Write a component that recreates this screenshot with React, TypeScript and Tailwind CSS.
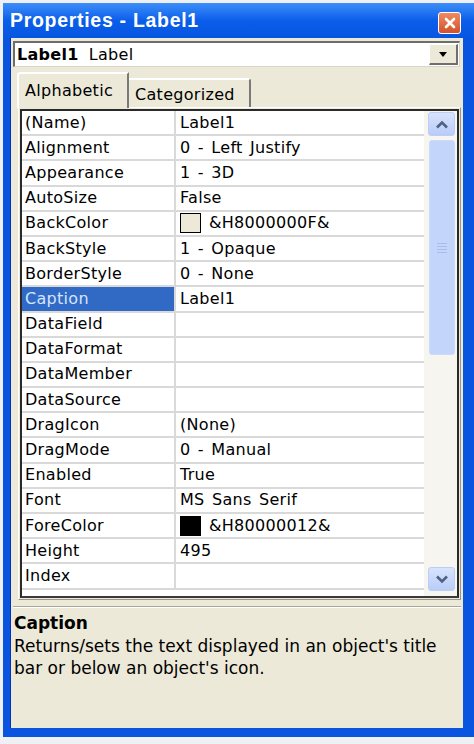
type Row = { name: string; value: string; swatch?: string; selected?: boolean };

const rows: Row[] = [
  { name: "(Name)", value: "Label1" },
  { name: "Alignment", value: "0 - Left Justify" },
  { name: "Appearance", value: "1 - 3D" },
  { name: "AutoSize", value: "False" },
  { name: "BackColor", value: "&H8000000F&", swatch: "bg-[#ece9d8]" },
  { name: "BackStyle", value: "1 - Opaque" },
  { name: "BorderStyle", value: "0 - None" },
  { name: "Caption", value: "Label1", selected: true },
  { name: "DataField", value: "" },
  { name: "DataFormat", value: "" },
  { name: "DataMember", value: "" },
  { name: "DataSource", value: "" },
  { name: "DragIcon", value: "(None)" },
  { name: "DragMode", value: "0 - Manual" },
  { name: "Enabled", value: "True" },
  { name: "Font", value: "MS Sans Serif" },
  { name: "ForeColor", value: "&H80000012&", swatch: "bg-black" },
  { name: "Height", value: "495" },
  { name: "Index", value: "" },
];

function Chevron({ up }: { up?: boolean }) {
  return (
    <svg width="14" height="9" viewBox="0 0 14 9">
      <path
        d={up ? "M2 7.5 L7 2.5 L12 7.5" : "M2 1.5 L7 6.5 L12 1.5"}
        fill="none"
        stroke="#4d6185"
        strokeWidth="2.6"
      />
    </svg>
  );
}

function ScrollButton({ up }: { up?: boolean }) {
  return (
    <div className="w-[27px] h-[24px] rounded-[3px] border border-[#bccdf6] bg-linear-to-b from-[#d8e3fd] to-[#b9ccf9] flex items-center justify-center">
      <Chevron up={up} />
    </div>
  );
}

function Grid() {
  return (
    <div className="flex h-full bg-white">
      <div className="flex-1 flex flex-col">
        {rows.map((r) => (
          <div key={r.name} className="flex h-[25.2px] border-b-2 border-[#d9d9d9]">
            <div
              className={
                "w-[154px] pl-[3px] flex items-center border-r-2 border-[#d9d9d9] " +
                (r.selected ? "bg-[#316ac5] text-[#d4e4ff]" : "text-black")
              }
            >
              {r.name}
            </div>
            <div className="flex-1 pl-[4px] flex items-center gap-[8px] text-black [word-spacing:2px]">
              {r.swatch && <span className={"w-[21px] h-[20px] border-[1.5px] border-black " + r.swatch} />}
              {r.value}
            </div>
          </div>
        ))}
      </div>
      <div className="w-[33px] bg-[#f6f5f0] flex flex-col items-center pt-[1px] pb-[5px] pl-[2px]">
        <ScrollButton up />
        <div className="flex-1 w-full flex flex-col items-center pt-[4px]">
          <div className="w-[26px] h-[215px] rounded-[3px] border border-[#cddbfb] bg-[#c4d5fb] flex flex-col items-center justify-center gap-[2px]">
            <div className="w-[10px] h-px bg-[#a8bcec]" />
            <div className="w-[10px] h-px bg-[#a8bcec]" />
            <div className="w-[10px] h-px bg-[#a8bcec]" />
            <div className="w-[10px] h-px bg-[#a8bcec]" />
          </div>
        </div>
        <ScrollButton />
      </div>
    </div>
  );
}

export default function App() {
  return (
    <div className="w-[474px] h-[744px] bg-[#eef0f3] pt-[3px] pl-[3px] pb-[7px] font-['DejaVu_Sans',Verdana,sans-serif] text-[16px] tracking-[0.3px] overflow-hidden">
      <div className="h-full flex flex-col bg-[#0a55e0]">
        {/* Title bar */}
        <div className="h-[35px] shrink-0 flex items-center justify-between pl-[7px] pr-[13px] bg-linear-to-b from-[#3c8ef9] via-[#0a5ee9] to-[#0756e2]">
          <span className="text-white font-bold text-[19.5px] tracking-[0.7px] font-['Liberation_Sans',Arial,sans-serif]">
            Properties - Label1
          </span>
          <div className="mt-[4px] w-[23px] h-[22px] rounded-[3px] border border-white bg-linear-to-b from-[#f08a60] to-[#d2502a] flex items-center justify-center">
            <svg width="12" height="12" viewBox="0 0 12 12">
              <path d="M2 2 L10 10 M10 2 L2 10" stroke="white" strokeWidth="2.6" strokeLinecap="round" />
            </svg>
          </div>
        </div>

        {/* Body */}
        <div className="flex-1 ml-[7px] mr-[11px] mb-[9px] bg-[#ece9d8] flex flex-col border-l border-[#0831b0]">
          {/* Object combo */}
          <div className="mt-[3px] ml-[2px] w-[447px] h-[26px] bg-white border-t-2 border-l-2 border-[#6d6d6d] border-b border-r border-b-[#d8d5c8] border-r-[#d8d5c8] flex items-center justify-between">
            <span className="pl-[2px] text-black">
              <span className="font-bold">Label1</span>
              <span className="ml-[10px]">Label</span>
            </span>
            <div className="w-[29px] h-[21px] mr-[1px] bg-[#ece9d8] border-t border-l border-white border-b-2 border-r-2 border-b-[#6f6f6f] border-r-[#6f6f6f] flex items-center justify-center">
              <svg width="8" height="5" viewBox="0 0 8 5">
                <path d="M0 0 H8 L4 5 Z" fill="black" />
              </svg>
            </div>
          </div>

          {/* Tabs */}
          <div className="mt-[5px] ml-[6px] h-[36px] flex items-end relative z-10">
            <div className="w-[112px] h-[36px] bg-[#ece9d8] border-l-2 border-t-2 border-white border-r-2 border-r-[#7a7a7a] rounded-tl-[3px] pl-[6px] pt-[5px] text-black">
              Alphabetic
            </div>
            <div className="w-[122px] h-[29px] mb-[1px] bg-[#ece9d8] border-t-2 border-white border-r-2 border-r-[#7a7a7a] rounded-tr-[3px] pl-[6px] pt-[3px] text-black">
              Categorized
            </div>
          </div>

          {/* Grid panel */}
          <div className="-mt-[1px] ml-[7px] w-[443px] h-[493px] border border-[#9a978a] border-t-white border-l-white p-[1px]">
            <div className="h-full border-2 border-[#2a2a2a] border-b-[#3a3a3a]">
              <Grid />
            </div>
          </div>

          {/* Description */}
          <div className="mt-[6px] mx-[2px] border-t border-[#a9a694] border-b border-b-white" />
          <div className="pl-[3px] pt-[4px] text-black text-[17px] tracking-normal">
            <div className="font-bold leading-[22px]">Caption</div>
            <div className="leading-[22px] mt-[1px]">
              Returns/sets the text displayed in an object's title
              <br />
              bar or below an object's icon.
            </div>
          </div>
        </div>
      </div>
    </div>
  );
}
